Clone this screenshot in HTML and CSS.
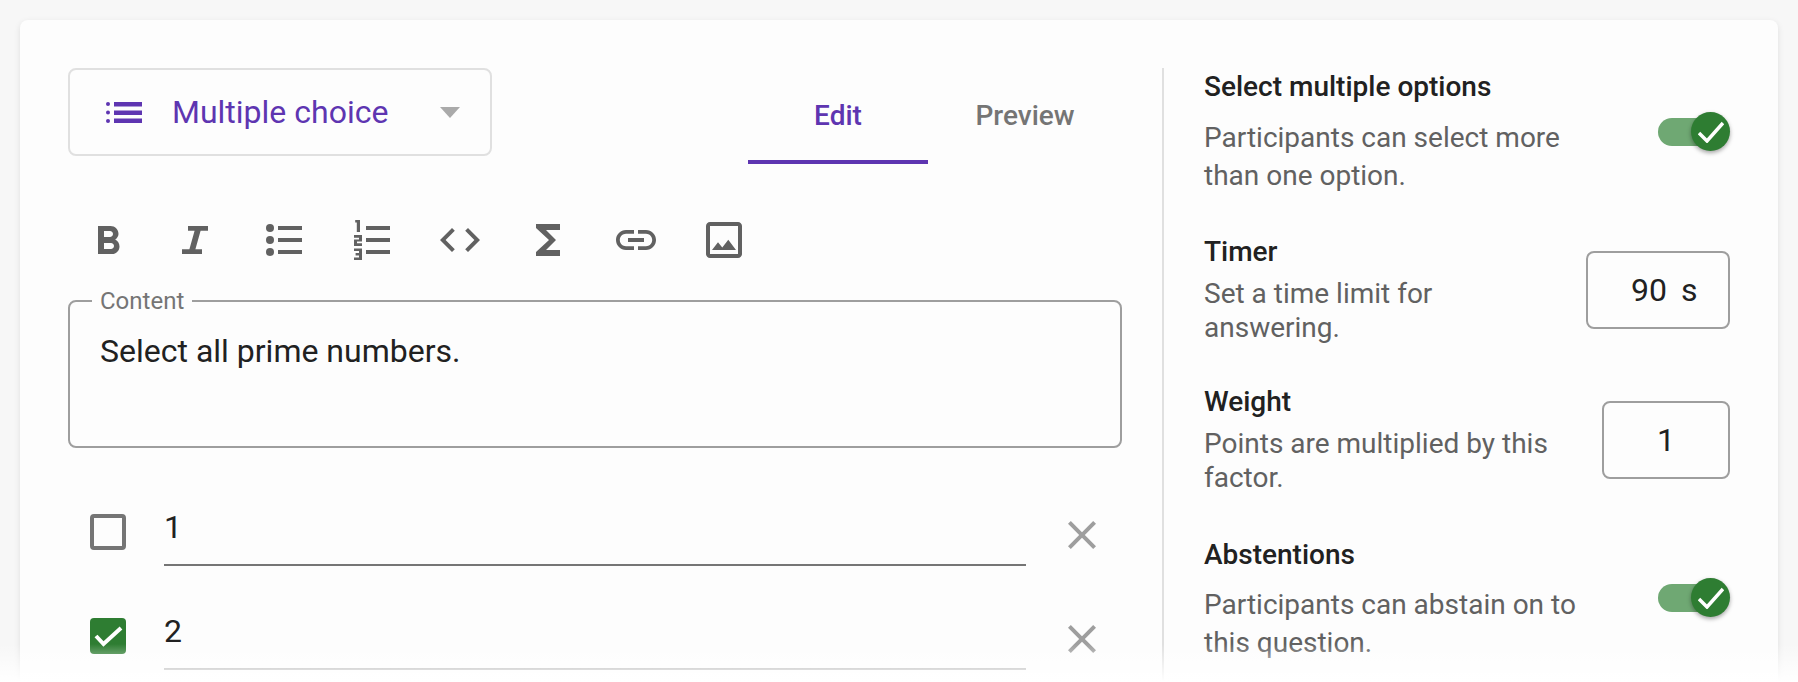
FILE: index.html
```html
<!DOCTYPE html>
<html lang="en">
<head>
<meta charset="utf-8">
<title>Question editor</title>
<link rel="stylesheet" href="styles.css">
</head>
<body>
<main class="card">
  <section class="editor">
    <header class="head">
      <div class="select">
        <svg class="select-icon" viewBox="0 0 36 21"><path d="M8 0h28v4.500H8zM8 8.500h28v4.500H8zM8 16.500h28v4.500H8z"/><circle cx="2" cy="2" r="2"/><circle cx="2" cy="10.500" r="2"/><circle cx="2" cy="19" r="2"/></svg>
        <span class="select-text">Multiple choice</span>
        <span class="caret"></span>
      </div>
      <nav class="tabs">
        <div class="tab tab-edit">Edit</div>
        <div class="tab tab-preview">Preview</div>
      </nav>
    </header>
    <div class="toolbar">
      <svg class="tool" viewBox="0 -1 24 24"><path d="M15.6 10.79c.97-.67 1.65-1.77 1.65-2.79 0-2.26-1.75-4-4-4H7v14h7.04c2.09 0 3.71-1.7 3.71-3.79 0-1.52-.86-2.82-2.15-3.42zM10 6.500h3c.83 0 1.500.67 1.500 1.500s-.67 1.500-1.500 1.500h-3v-3zm3.500 9H10v-3h3.500c.83 0 1.500.67 1.500 1.500s-.67 1.500-1.500 1.500z"/></svg>
      <svg class="tool" viewBox="0 0 24 24"><path d="M8 5h10v2.400h-3.700l-2.600 9.200H15V19H5v-2.400h3.700l2.600-9.200H8z"/></svg>
      <svg class="tool" viewBox="0 0 24 24"><path d="M9 5h12v2H9zM9 11h12v2H9zM9 17h12v2H9z"/><circle cx="5" cy="6" r="2"/><circle cx="5" cy="12" r="2"/><circle cx="5" cy="18" r="2"/></svg>
      <svg class="tool" viewBox="0 0 24 24"><path d="M9 5h12v2H9zM9 11h12v2H9zM9 17h12v2H9zM3.600 2h2.400v6H4.400V3.300h-.8zM3 9.500h4v3.200H4.500v.9H7V15H3v-3.200h2.500v-.9H3zM3 16.200h4V22H3v-1.300h2.500v-1H3.800v-1.200h1.700v-1H3z"/></svg>
      <svg class="tool" viewBox="0 0 24 24"><path d="M9.400 16.600L4.800 12l4.600-4.600L8 6l-6 6 6 6 1.400-1.400zm5.200 0l4.600-4.600-4.600-4.600L16 6l6 6-6 6-1.400-1.400z"/></svg>
      <svg class="tool" viewBox="0 0 24 24"><path d="M18 4H6v2l6.500 6L6 18v2h12v-3h-7l5-5-5-5h7z"/></svg>
      <svg class="tool" viewBox="0 0 24 24"><path d="M3.900 12c0-1.710 1.390-3.100 3.100-3.100h4V7H7c-2.760 0-5 2.240-5 5s2.240 5 5 5h4v-1.900H7c-1.710 0-3.100-1.390-3.100-3.100zM8 13h8v-2H8v2zm9-6h-4v1.900h4c1.710 0 3.100 1.390 3.100 3.100s-1.390 3.100-3.100 3.100h-4V17h4c2.760 0 5-2.240 5-5s-2.240-5-5-5z"/></svg>
      <svg class="tool" viewBox="0 0 24 24"><path d="M19 5v14H5V5h14m0-2H5c-1.100 0-2 .9-2 2v14c0 1.100.9 2 2 2h14c1.100 0 2-.9 2-2V5c0-1.100-.9-2-2-2zm-4.860 8.860l-3 3.870L9 13.140 6 17h12l-3.860-5.140z"/></svg>
    </div>
    <fieldset class="content">
      <legend class="content-label">Content</legend>
      <div class="content-text">Select all prime numbers.</div>
    </fieldset>
    <div class="options">
      <div class="option">
        <span class="box"></span>
        <div class="answer answer-active">1</div>
        <svg class="close" viewBox="0 0 24 24"><path d="M19 6.410L17.590 5 12 10.590 6.410 5 5 6.410 10.590 12 5 17.590 6.410 19 12 13.410 17.590 19 19 17.590 13.410 12z"/></svg>
      </div>
      <div class="option">
        <span class="box box-on"><svg class="box-check" viewBox="0 0 36 36"><path d="M6 18l7.500 8L31 10"/></svg></span>
        <div class="answer">2</div>
        <svg class="close" viewBox="0 0 24 24"><path d="M19 6.410L17.590 5 12 10.590 6.410 5 5 6.410 10.590 12 5 17.590 6.410 19 12 13.410 17.590 19 19 17.590 13.410 12z"/></svg>
      </div>
    </div>
  </section>
  <aside class="settings">
    <div class="setting setting-toggle">
      <h3 class="title">Select multiple options</h3>
      <div class="row">
        <p class="desc desc-loose">Participants can select more than one option.</p>
        <span class="switch"><span class="thumb"><svg class="thumb-check" viewBox="0 0 26 22"><path d="M1 12l8 8L25 2"/></svg></span></span>
      </div>
    </div>
    <div class="setting setting-field">
      <div class="field-text">
        <h3 class="title">Timer</h3>
        <p class="desc">Set a time limit for answering.</p>
      </div>
      <div class="num num-timer"><span>90</span><span>s</span></div>
    </div>
    <div class="setting setting-field">
      <div class="field-text">
        <h3 class="title">Weight</h3>
        <p class="desc">Points are multiplied by this factor.</p>
      </div>
      <div class="num num-weight">1</div>
    </div>
    <div class="setting setting-toggle setting-last">
      <h3 class="title">Abstentions</h3>
      <div class="row">
        <p class="desc desc-loose">Participants can abstain on to this question.</p>
        <span class="switch"><span class="thumb"><svg class="thumb-check" viewBox="0 0 26 22"><path d="M1 12l8 8L25 2"/></svg></span></span>
      </div>
    </div>
  </aside>
</main>
<div class="fade"></div>
</body>
</html>
```
FILE: styles.css
```css
* { box-sizing: border-box; }
html, body { margin: 0; height: 682px; overflow: hidden; }
body {
  background: #f7f7f7;
  font-family: Roboto, "Liberation Sans", sans-serif;
  padding: 20px 20px 0;
  position: relative;
}
.card {
  display: flex;
  width: 1758px;
  height: 760px;
  background: #fdfdfd;
  border-radius: 8px;
  box-shadow: 0 2px 6px rgba(0, 0, 0, .1);
  padding: 48px 48px 0;
}
.editor { width: 1054px; flex: none; }
.head { display: flex; align-items: flex-start; justify-content: space-between; height: 96px; }
.select {
  width: 424px;
  height: 88px;
  border: 2px solid #e0e0e0;
  border-radius: 8px;
  display: flex;
  align-items: center;
  padding-left: 36px;
  color: #5e35b1;
}
.select-icon { width: 36px; height: 21px; fill: #5e35b1; flex: none; }
.select-text { font-size: 32px; margin-left: 30px; }
.caret {
  margin-left: 52px;
  width: 0;
  height: 0;
  border-left: 10px solid transparent;
  border-right: 10px solid transparent;
  border-top: 11px solid #aaa;
}
.tabs { display: flex; width: 374px; }
.tab {
  height: 96px;
  display: flex;
  align-items: center;
  justify-content: center;
  font-size: 28px;
  font-weight: 500;
  padding-bottom: 2px;
}
.tab-edit { width: 180px; color: #5e35b1; box-shadow: inset 0 -4px 0 #5e35b1; }
.tab-preview { width: 194px; color: #757575; }
.toolbar { display: flex; gap: 40px; margin-top: 52px; padding-left: 16px; }
.tool { width: 48px; height: 48px; fill: #616161; flex: none; }
.content {
  margin: 25px 0 0;
  padding: 0 0 0 30px;
  height: 159px;
  border: 2px solid #9e9e9e;
  border-radius: 8px;
  min-width: 0;
}
.content-label {
  margin-left: -8px;
  padding: 0 8px;
  font-size: 24px;
  line-height: 24px;
  color: #757575;
}
.content-text { font-size: 32px; line-height: 38px; color: #212121; margin-top: 19px; }
.options { margin-top: 48px; display: flex; flex-direction: column; gap: 18px; }
.option { display: flex; align-items: flex-start; height: 86px; padding-left: 22px; }
.box {
  width: 36px;
  height: 36px;
  border: 4px solid #757575;
  border-radius: 4px;
  flex: none;
  margin-top: 18px;
}
.box-on { background: #2e7d32; border: 0; }
.box-check { display: block; width: 36px; height: 36px; fill: none; stroke: #fff; stroke-width: 4; }
.answer {
  width: 862px;
  height: 70px;
  margin-left: 38px;
  border-bottom: 2px solid #757575;
  font-size: 32px;
  line-height: 38px;
  color: #212121;
  padding-top: 12px;
}
.option + .option .answer { border-bottom-color: #949494; }
.close { width: 48px; height: 48px; fill: #9e9e9e; margin-left: 32px; margin-top: 15px; flex: none; }
.settings {
  flex: 1;
  margin-left: 40px;
  border-left: 2px solid #e0e0e0;
  padding-left: 40px;
  display: flex;
  flex-direction: column;
  gap: 38px;
}
.title { margin: 0; font-size: 28px; font-weight: 500; line-height: 38px; color: #212121; }
.desc { margin: 6px 0 0; font-size: 28px; line-height: 34px; color: #616161; }
.desc-loose { line-height: 38px; margin: 0; width: 400px; }
.row { display: flex; justify-content: space-between; align-items: flex-start; margin-top: 13px; }
.setting-last { margin-top: 3px; }
.setting-last .row { margin-top: 12px; }
.switch {
  display: block;
  width: 63px;
  height: 28px;
  margin: -1px 9px 0 0;
  background: #6fa873;
  border-radius: 14px;
  position: relative;
  flex: none;
}
.setting-last .switch { margin-top: -2px; }
.thumb {
  position: absolute;
  right: -9px;
  top: -6px;
  width: 39px;
  height: 39px;
  border-radius: 50%;
  background: #2e7d32;
  box-shadow: 0 2px 4px rgba(0, 0, 0, .35);
  display: flex;
  align-items: center;
  justify-content: center;
}
.thumb-check { width: 26px; height: 22px; fill: none; stroke: #fff; stroke-width: 3.500; }
.setting-field { display: flex; justify-content: space-between; align-items: flex-start; }
.field-text { width: 350px; }
.num {
  margin-top: 18px;
  height: 78px;
  border: 2px solid #9e9e9e;
  border-radius: 8px;
  font-size: 32px;
  color: #212121;
  display: flex;
  align-items: center;
}
.num-timer { width: 144px; padding-left: 43px; gap: 14px; }
.num-weight { width: 128px; justify-content: center; }
.fade {
  position: absolute;
  left: 0;
  right: 0;
  bottom: 0;
  height: 38px;
  background: linear-gradient(rgba(255, 255, 255, 0), #fff);
}
```
